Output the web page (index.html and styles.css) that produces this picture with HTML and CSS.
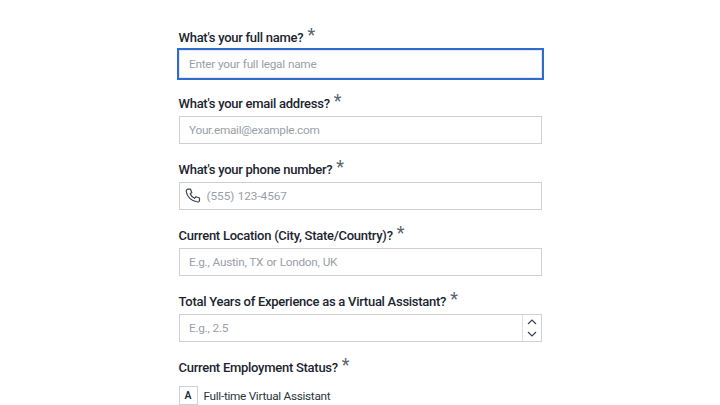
FILE: index.html
```html
<!DOCTYPE html>
<html lang="en">
<head>
<meta charset="utf-8">
<title>Application form</title>
<link rel="stylesheet" href="styles.css">
</head>
<body>
<form class="form">
  <div class="field">
    <label class="label" for="name">What's your full name?<span class="req">*</span></label>
    <div class="box focused"><input id="name" class="input" placeholder="Enter your full legal name"></div>
  </div>
  <div class="field">
    <label class="label" for="email">What's your email address?<span class="req">*</span></label>
    <div class="box"><input id="email" class="input" placeholder="Your.email@example.com"></div>
  </div>
  <div class="field">
    <label class="label" for="phone">What's your phone number?<span class="req">*</span></label>
    <div class="box">
      <svg class="phone" viewBox="0 0 16 16" fill="none" stroke="#3a434e" stroke-width="1.2" stroke-linejoin="round"><path d="M3.200 1.200h2.300l1.300 3.300-1.600 1.300c.7 1.900 2.400 3.700 4.400 4.500l1.400-1.600 3.500 1.300v2.300c0 1-.8 1.800-1.800 1.700C6.400 13.500 1.800 8.400 1.200 3.300 1.100 2.100 2 1.200 3.200 1.200z"/></svg>
      <input id="phone" class="input input-icon" placeholder="(555) 123-4567">
    </div>
  </div>
  <div class="field">
    <label class="label" for="loc">Current Location (City, State/Country)?<span class="req">*</span></label>
    <div class="box"><input id="loc" class="input" placeholder="E.g., Austin, TX or London, UK"></div>
  </div>
  <div class="field">
    <label class="label" for="years">Total Years of Experience as a Virtual Assistant?<span class="req">*</span></label>
    <div class="box">
      <input id="years" class="input" placeholder="E.g., 2.5">
      <div class="stepper">
        <svg class="chev" viewBox="0 0 10 6" fill="none" stroke="#3a434e" stroke-width="1.200"><path d="M1 5L5 1l4 4"/></svg>
        <svg class="chev" viewBox="0 0 10 6" fill="none" stroke="#3a434e" stroke-width="1.200"><path d="M1 1l4 4 4-4"/></svg>
      </div>
    </div>
  </div>
  <div class="field">
    <div class="label">Current Employment Status?<span class="req">*</span></div>
    <div class="option"><span class="key">A</span><span class="opt-text">Full-time Virtual Assistant</span></div>
  </div>
</form>
</body>
</html>
```
FILE: styles.css
```css
* { box-sizing: border-box; }
html, body { margin: 0; height: 405px; overflow: hidden; background: #fff; }
body { font-family: Roboto, "Noto Sans", sans-serif; color: #1f2a37; }
.form { width: 363px; margin-left: 178.500px; padding-top: 27px; display: flex; flex-direction: column; gap: 15px; }
.field { display: flex; flex-direction: column; }
.label { height: 23px; font-size: 13px; font-weight: 500; line-height: 21px; letter-spacing: -0.270px; display: block; white-space: nowrap; color: #1b2530; }
.req { font-size: 18px; font-weight: 400; color: #5b6470; margin-left: 4px; line-height: 10px; letter-spacing: 0; position: relative; top: -1px; }
.box { height: 28px; width: 363px; border: 1px solid #cdd0d5; display: flex; align-items: center; background: #fff; }
.focused { outline: 2px solid #2f6bcc; outline-offset: 0; border-color: #e3e6ea; }
.input { flex: 1; min-width: 0; height: 100%; border: 0; outline: 0; background: transparent; padding: 0 0 0 9.500px; font: 400 11.800px Roboto, sans-serif; color: #1f2a37; letter-spacing: -0.280px; word-spacing: 0.500px; }
.input::placeholder { color: #9aa0a8; opacity: 1; }
.input-icon { padding-left: 6px; letter-spacing: -0.050px; }
.phone { width: 16px; height: 16px; margin-left: 5px; flex: none; }
.stepper { width: 19px; height: 100%; border-left: 1px solid #dcdfe3; padding: 4px 0; display: flex; flex-direction: column; align-items: center; justify-content: space-between; flex: none; }
.chev { width: 10px; height: 6px; }
.option { display: flex; align-items: center; gap: 6px; margin-top: 6px; }
.key { width: 19px; height: 19px; border: 1px solid #cdd0d5; display: flex; align-items: center; justify-content: center; font-size: 10.500px; font-weight: 600; color: #1f2a37; }
.opt-text { font-size: 11.800px; letter-spacing: -0.300px; color: #2b3540; }
```
